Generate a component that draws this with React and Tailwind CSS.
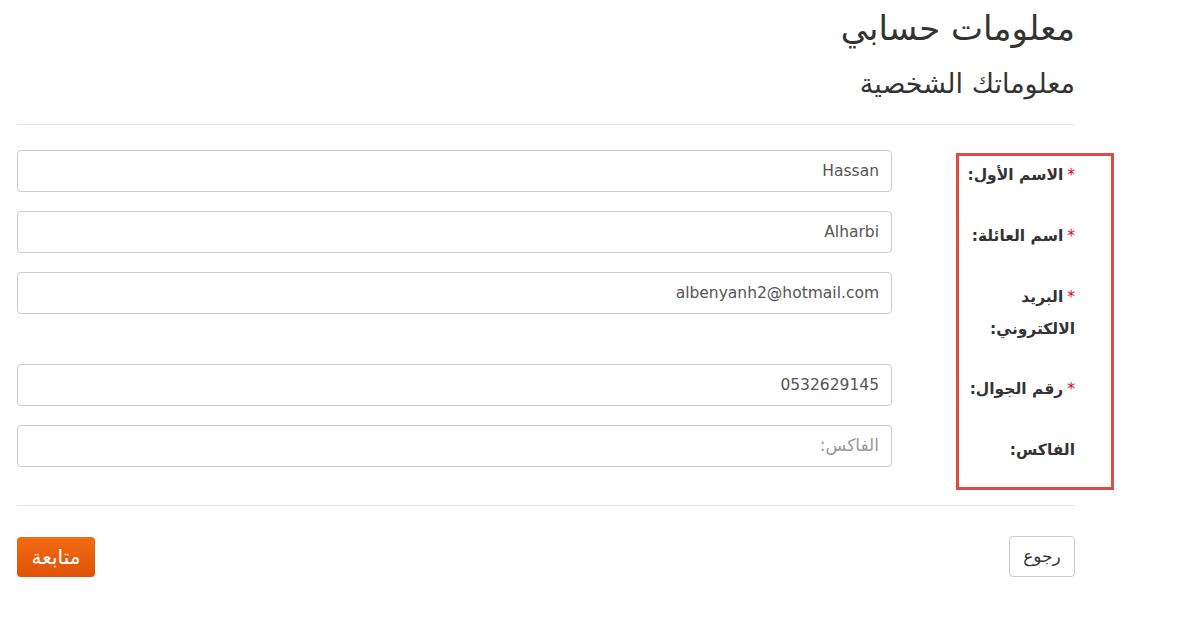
import React from 'react';

const fields = [
  { label: 'الاسم الأول:', value: 'Hassan', required: true },
  { label: 'اسم العائلة:', value: 'Alharbi', required: true },
  { label: ['البريد', 'الالكتروني:'], value: 'albenyanh2@hotmail.com', required: true },
  { label: 'رقم الجوال:', value: '0532629145', required: true },
  { label: 'الفاكس:', value: '', placeholder: 'الفاكس:', required: false },
];

const Field = ({ label, value, placeholder, required }) => (
  <div className="flex items-start">
    <label className="w-[183px] shrink-0 pt-[9px] text-[15.5px] leading-[32px] font-bold text-[#333]">
      {required && <span className="text-[#e4002b] font-normal ml-1">*</span>}
      {Array.isArray(label) ? (
        <>
          {label[0]}
          <br />
          {label[1]}
        </>
      ) : (
        label
      )}
    </label>
    <input
      readOnly
      defaultValue={value}
      placeholder={placeholder}
      className="flex-1 h-[42px] rounded border border-[#ccc] bg-white px-3 text-[15.5px] text-[#555] placeholder:text-[17px] placeholder:text-[#999] outline-none"
      style={{ fontFamily: '"DejaVu Sans", sans-serif' }}
    />
  </div>
);

export default function App() {
  return (
    <div className="relative min-h-screen bg-white" style={{ fontFamily: '"DejaVu Sans", "Noto Sans", sans-serif' }}>
      <div dir="rtl" className="ml-[17px] w-[1058px]">
        {/* Headings */}
        <h1 className="pt-[8px] text-[34px] leading-[40px] text-[#333]">معلومات حسابي</h1>
        <h2 className="mt-[20px] text-[27px] leading-[32px] text-[#333]">معلوماتك الشخصية</h2>
        <hr className="mt-[24px] border-t border-[#e5e5e5]" />

        {/* Form */}
        <div className="mt-[25px] flex flex-col gap-[19px]">
          {fields.map((f, i) => (
            <Field key={i} {...f} />
          ))}
        </div>

        <hr className="mt-[38px] border-t border-[#e5e5e5]" />

        {/* Actions */}
        <div className="mt-[30px] flex justify-between items-center">
          <button className="h-[41px] w-[66px] rounded border border-[#ccc] bg-white text-[17px] text-[#333]">رجوع</button>
          <button className="h-[40px] w-[78px] rounded bg-gradient-to-b from-[#f36b12] to-[#df5208] text-[20px] text-white">متابعة</button>
        </div>
      </div>

      {/* Highlight box */}
      <div className="absolute left-[956px] top-[153px] w-[158px] h-[337px] border-[3px] border-[#dd4b45] pointer-events-none" />
    </div>
  );
}
